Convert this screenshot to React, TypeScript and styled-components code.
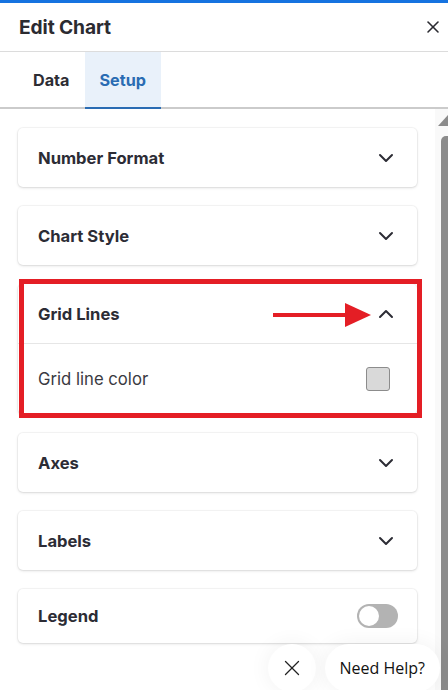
import React from "react";
import styled, { createGlobalStyle } from "styled-components";
import { X, ChevronDown, ChevronUp } from "lucide-react";

const GlobalStyle = createGlobalStyle`
  html, body { margin: 0; padding: 0; background: #ffffff; overflow: hidden; }
  body { font-family: Inter, "Noto Sans", sans-serif; -webkit-font-smoothing: antialiased; }
  * { box-sizing: border-box; }
`;

const Panel = styled.div`
  width: 448px;
  height: 690px;
  display: flex;
  flex-direction: column;
  border-top: 3px solid #1673e0;
  background: #fff;
  position: relative;
  overflow: hidden;
`;

const Header = styled.header`
  height: 49px;
  flex: none;
  display: flex;
  align-items: center;
  justify-content: space-between;
  padding: 0 5px 1px 19px;
  border-bottom: 1px solid #dcdcdc;
`;

const Title = styled.h1`
  margin: 0;
  font-size: 19.2px;
  font-weight: 700;
  color: #2b2b31;
  letter-spacing: -0.1px;
`;

const IconButton = styled.button`
  border: none;
  background: none;
  padding: 0;
  display: flex;
  align-items: center;
  justify-content: center;
  color: #2b2b31;
  cursor: pointer;
`;

const Tabs = styled.nav`
  height: 57px;
  flex: none;
  display: flex;
  padding-left: 18px;
  border-bottom: 2px solid #cbcbcb;
`;

const Tab = styled.div<{ $active?: boolean }>`
  display: flex;
  align-items: center;
  padding: 0 15px;
  margin-bottom: -2px;
  font-size: 16.2px;
  font-weight: 700;
  color: ${(p) => (p.$active ? "#2a6cb3" : "#2d2d33")};
  background: ${(p) => (p.$active ? "#e9f1fa" : "transparent")};
  border-bottom: 2px solid ${(p) => (p.$active ? "#2a6cb3" : "transparent")};
`;

const Body = styled.div`
  flex: 1;
  display: flex;
  min-height: 0;
`;

const Main = styled.main`
  flex: 1;
  display: flex;
  flex-direction: column;
  gap: 19px;
  padding: 19px 18px 0 18px;
`;

const Card = styled.section`
  position: relative;
  background: #fff;
  border-radius: 5px;
  box-shadow: 0 1px 3px rgba(0, 0, 0, 0.13), 0 0 0 1px rgba(0, 0, 0, 0.035);
`;

const CardHeader = styled.div<{ $h?: number; $divider?: boolean }>`
  height: ${(p) => p.$h ?? 59}px;
  display: flex;
  align-items: center;
  justify-content: space-between;
  padding: 0 19px 0 20px;
  border-bottom: ${(p) => (p.$divider ? "1px solid #e6e6e6" : "none")};
`;

const CardTitle = styled.h2`
  margin: 0;
  font-size: 16.6px;
  font-weight: 700;
  color: #2c2c35;
`;

const Row = styled.div`
  height: 70px;
  display: flex;
  align-items: center;
  justify-content: space-between;
  padding: 0 27px 0 20px;
`;

const RowLabel = styled.span`
  font-size: 16.7px;
  font-weight: 400;
  color: #3a3a42;
`;

const Swatch = styled.div`
  width: 24px;
  height: 24px;
  border-radius: 3px;
  background: #d9d9d9;
  border: 1px solid #8c8c8c;
`;

const Toggle = styled.div`
  width: 41px;
  height: 24px;
  border-radius: 12px;
  background: #b3b3b3;
  padding: 2px;
  display: flex;
`;

const Knob = styled.div`
  width: 20px;
  height: 20px;
  border-radius: 50%;
  background: #fff;
`;

const Highlight = styled.div`
  position: absolute;
  left: 1px;
  top: -5px;
  right: -5px;
  bottom: -4px;
  border: 5px solid #e41e25;
  pointer-events: none;
`;

const Pointer = styled.svg`
  position: absolute;
  left: 255px;
  top: 16px;
  pointer-events: none;
`;

const ScrollTrack = styled.div`
  width: 13px;
  flex: none;
  background: #f9f9f9;
  padding-top: 6px;
  display: flex;
  flex-direction: column;
  overflow: hidden;
`;

const ScrollArrow = styled.svg`
  flex: none;
  display: block;
`;

const ScrollThumb = styled.div`
  flex: 1;
  margin: 10px -6px 0 6px;
  background: #8b8b8b;
  border-radius: 5px 5px 0 0;
`;

const HelpDock = styled.div`
  position: absolute;
  right: 8px;
  bottom: -2px;
  display: flex;
  gap: 9px;
  align-items: center;
`;

const HelpClose = styled.button`
  width: 48px;
  height: 48px;
  border-radius: 50%;
  border: none;
  background: #fff;
  box-shadow: 0 0 22px rgba(0, 0, 0, 0.06);
  display: flex;
  align-items: center;
  justify-content: center;
  color: #222;
  padding: 0;
`;

const HelpPill = styled.button`
  height: 48px;
  border-radius: 24px;
  border: none;
  background: #fff;
  box-shadow: 0 0 22px rgba(0, 0, 0, 0.06);
  padding: 0 15px;
  font-family: "Open Sans", "Noto Sans", sans-serif;
  font-size: 16px;
  color: #111;
`;

const sections = ["Number Format", "Chart Style"];
const lower = ["Axes", "Labels"];

export default function App() {
  return (
    <>
      <GlobalStyle />
      <Panel>
        <Header>
          <Title>Edit Chart</Title>
          <IconButton aria-label="Close">
            <X size={20} strokeWidth={1.9} />
          </IconButton>
        </Header>
        <Tabs>
          <Tab>Data</Tab>
          <Tab $active>Setup</Tab>
        </Tabs>
        <Body>
          <Main>
            {sections.map((s) => (
              <Card key={s}>
                <CardHeader>
                  <CardTitle>{s}</CardTitle>
                  <ChevronDown size={24} strokeWidth={2} color="#2c2c35" />
                </CardHeader>
              </Card>
            ))}
            <Card>
              <CardHeader $h={60} $divider>
                <CardTitle>Grid Lines</CardTitle>
                <ChevronUp size={24} strokeWidth={2} color="#2c2c35" />
              </CardHeader>
              <Row>
                <RowLabel>Grid line color</RowLabel>
                <Swatch />
              </Row>
              <Highlight />
              <Pointer width="100" height="30" viewBox="0 0 100 30">
                <line x1="0" y1="15" x2="74" y2="15" stroke="#e41e25" strokeWidth="4" />
                <polygon points="72,3 98,15 72,27" fill="#e41e25" />
              </Pointer>
            </Card>
            {lower.map((s) => (
              <Card key={s}>
                <CardHeader>
                  <CardTitle>{s}</CardTitle>
                  <ChevronDown size={24} strokeWidth={2} color="#2c2c35" />
                </CardHeader>
              </Card>
            ))}
            <Card>
              <CardHeader $h={54}>
                <CardTitle>Legend</CardTitle>
                <Toggle>
                  <Knob />
                </Toggle>
              </CardHeader>
            </Card>
          </Main>
          <ScrollTrack>
            <ScrollArrow width="13" height="11" viewBox="0 0 13 11">
              <polygon points="3,11 13,0 23,11" fill="#8b8b8b" />
            </ScrollArrow>
            <ScrollThumb />
          </ScrollTrack>
        </Body>
        <HelpDock>
          <HelpClose aria-label="Close help">
            <X size={26} strokeWidth={1.2} />
          </HelpClose>
          <HelpPill>Need Help?</HelpPill>
        </HelpDock>
      </Panel>
    </>
  );
}
